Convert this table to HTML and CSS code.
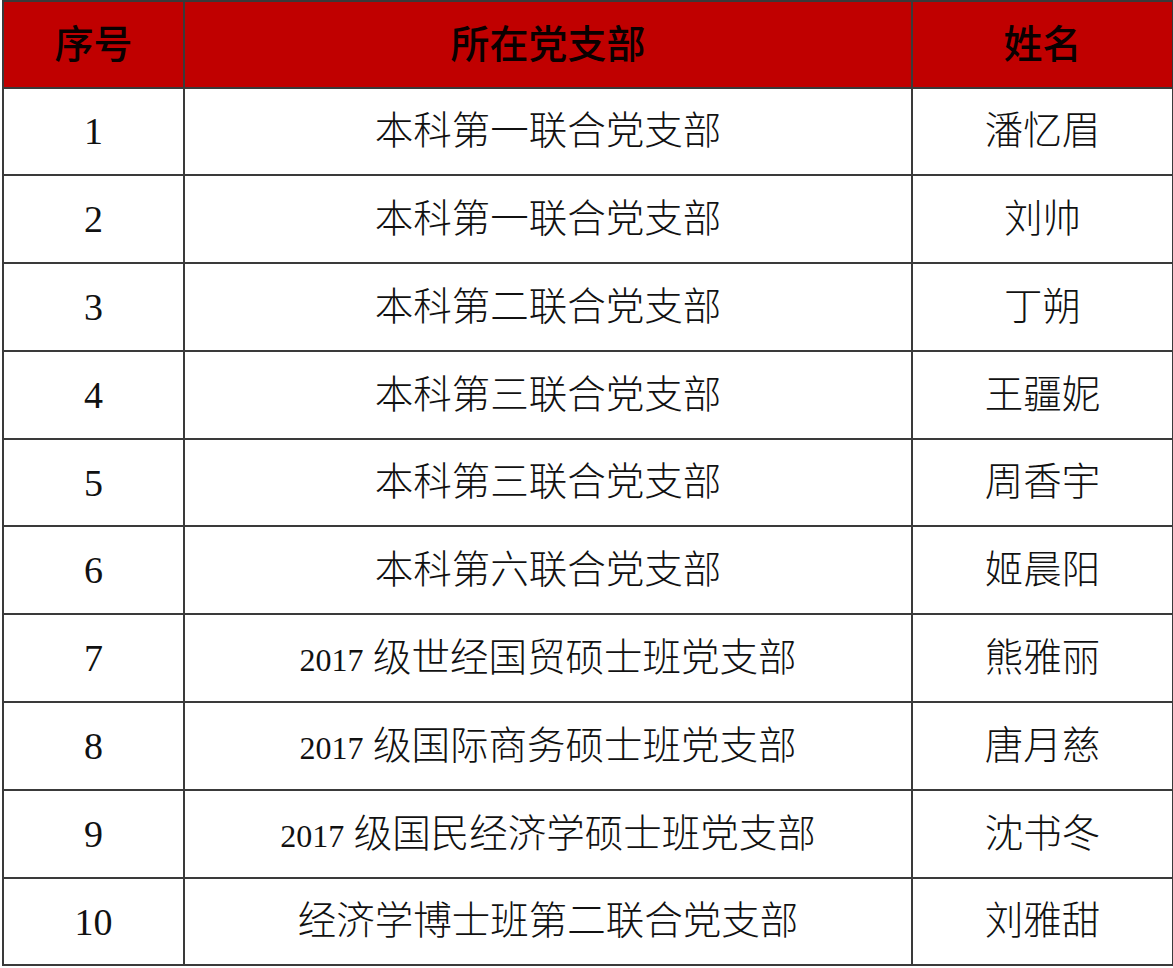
FILE: index.html
```html
<!DOCTYPE html>
<html lang="zh-CN">
<head>
<meta charset="utf-8">
<title>名单</title>
<link rel="stylesheet" href="styles.css">
</head>
<body>
<table class="list">
  <colgroup>
    <col class="c-no">
    <col class="c-branch">
    <col class="c-name">
  </colgroup>
  <thead>
    <tr><th>序号</th><th>所在党支部</th><th>姓名</th></tr>
  </thead>
  <tbody>
    <tr><td class="num">1</td><td>本科第一联合党支部</td><td>潘忆眉</td></tr>
    <tr><td class="num">2</td><td>本科第一联合党支部</td><td>刘帅</td></tr>
    <tr><td class="num">3</td><td>本科第二联合党支部</td><td>丁朔</td></tr>
    <tr><td class="num">4</td><td>本科第三联合党支部</td><td>王疆妮</td></tr>
    <tr><td class="num">5</td><td>本科第三联合党支部</td><td>周香宇</td></tr>
    <tr><td class="num">6</td><td>本科第六联合党支部</td><td>姬晨阳</td></tr>
    <tr><td class="num">7</td><td><span class="yr">2017</span> 级世经国贸硕士班党支部</td><td>熊雅丽</td></tr>
    <tr><td class="num">8</td><td><span class="yr">2017</span> 级国际商务硕士班党支部</td><td>唐月慈</td></tr>
    <tr><td class="num">9</td><td><span class="yr">2017</span> 级国民经济学硕士班党支部</td><td>沈书冬</td></tr>
    <tr><td class="num">10</td><td>经济学博士班第二联合党支部</td><td>刘雅甜</td></tr>
  </tbody>
</table>
</body>
</html>
```
FILE: styles.css
```css
html, body {
  margin: 0;
  padding: 0;
  background: #ffffff;
}
body {
  padding-left: 2px;
}
.list {
  border-collapse: collapse;
  table-layout: fixed;
  width: 1170px;
  font-family: "Liberation Serif", "Noto Sans CJK SC", serif;
  font-size: 38.5px;
  color: #111111;
}
.c-no { width: 181px; }
.c-branch { width: 728px; }
.c-name { width: 261px; }
.list th,
.list td {
  border: 2px solid #3a3a3a;
  height: 85.8px;
  padding: 0;
  text-align: center;
  vertical-align: middle;
  line-height: 1;
}
.list td {
  font-weight: 300;
}
.list th {
  height: 84.5px;
  background: #c00000;
  font-weight: 500;
  font-size: 39px;
  color: #0a0000;
}
.list td.num {
  font-size: 38px;
}
.yr {
  font-size: 32px;
}
```
